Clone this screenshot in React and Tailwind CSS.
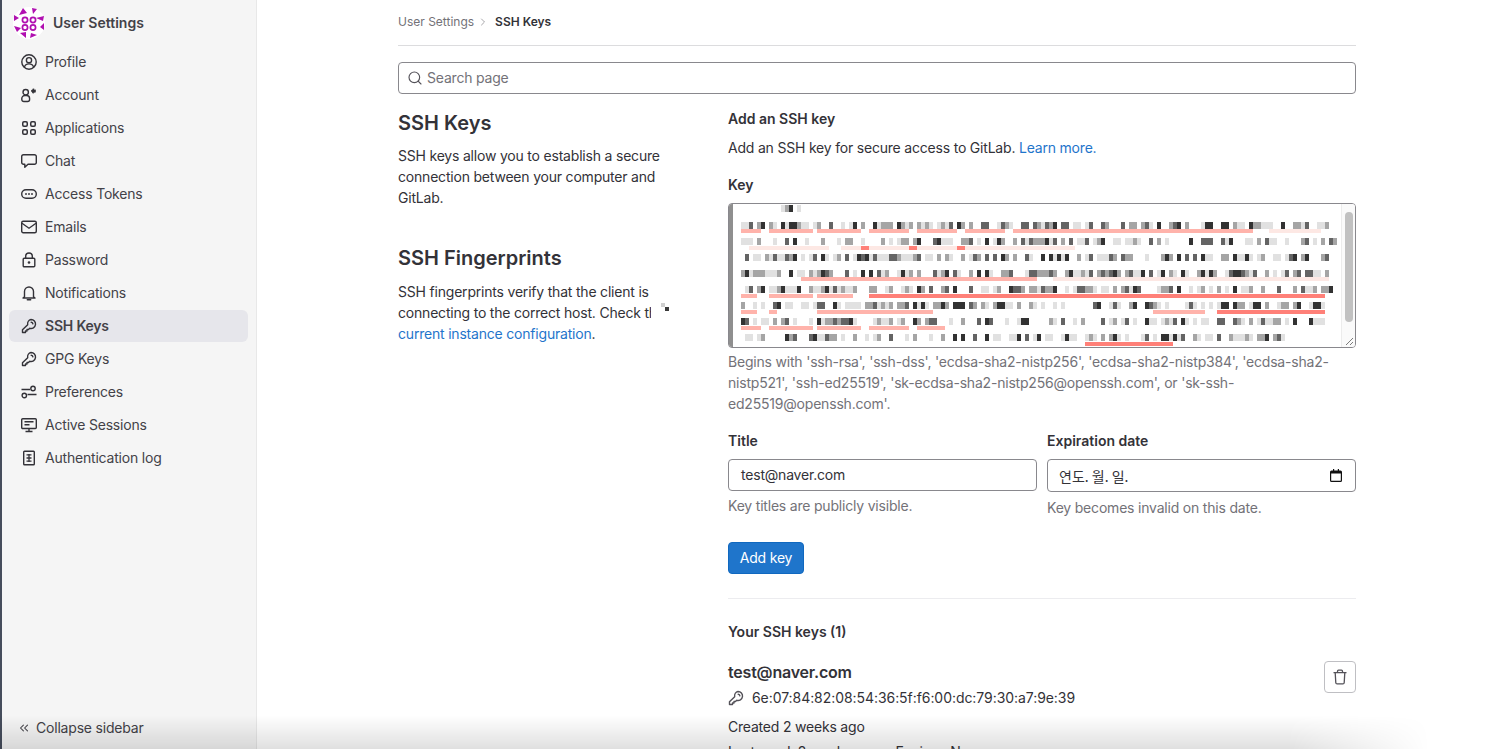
import { ChevronRight, ChevronsLeft, Search } from "lucide-react";

function KeyIcon({ className }) {
  return (
    <svg viewBox="0 0 16 16" fill="none" stroke="currentColor" strokeWidth="1.4" className={className}>
      <path d="M10 1.500a4.500 4.500 0 1 1-1.300 8.800L7.500 11.500H6V13H4.500v1.500h-3v-2.700l5.200-5.100A4.500 4.500 0 0 1 10 1.500z" strokeLinejoin="round" />
      <path d="M10.200 4.200c1 .1 1.600.7 1.700 1.700" strokeLinecap="round" />
    </svg>
  );
}

function ProfileIcon({ className }) {
  return (
    <svg viewBox="0 0 16 16" fill="none" stroke="currentColor" strokeWidth="1.400" className={className}>
      <circle cx="8" cy="8" r="7.200" />
      <circle cx="8" cy="6.200" r="2.600" />
      <path d="M3.400 13.300c.5-2.300 2-3.400 4.600-3.400s4.100 1.100 4.600 3.400" />
    </svg>
  );
}

function AccountIcon({ className }) {
  return (
    <svg viewBox="0 0 16 16" fill="none" stroke="currentColor" strokeWidth="1.400" className={className}>
      <circle cx="4.700" cy="5.200" r="2.700" />
      <path d="M.8 11.500a3 3 0 0 1 3-3h1.800a3 3 0 0 1 3 3v1a2 2 0 0 1-2 2H2.800a2 2 0 0 1-2-2z" />
      <circle cx="12.500" cy="4" r="1.700" fill="currentColor" strokeWidth="1.400" strokeDasharray="1.500 .6" />
    </svg>
  );
}

function AppsIcon({ className }) {
  return (
    <svg viewBox="0 0 16 16" fill="none" stroke="currentColor" strokeWidth="1.500" className={className}>
      <rect x="1.750" y="1.750" width="4.500" height="4.500" rx="1.200" />
      <rect x="9.750" y="1.750" width="4.500" height="4.500" rx="1.200" />
      <rect x="1.750" y="9.750" width="4.500" height="4.500" rx="1.200" />
      <rect x="9.750" y="9.750" width="4.500" height="4.500" rx="1.200" />
    </svg>
  );
}

function ChatIcon({ className }) {
  return (
    <svg viewBox="0 0 16 16" fill="none" stroke="currentColor" strokeWidth="1.400" strokeLinejoin="round" className={className}>
      <path d="M2.500 1.700h11a1.800 1.800 0 0 1 1.800 1.800v6a1.800 1.800 0 0 1-1.800 1.800H7l-3.200 3v-3H2.500A1.800 1.800 0 0 1 .7 9.500v-6a1.800 1.800 0 0 1 1.800-1.800z" />
    </svg>
  );
}

function TokenIcon({ className }) {
  return (
    <svg viewBox="0 0 16 16" fill="none" stroke="currentColor" strokeWidth="1.400" className={className}>
      <rect x=".700" y="3.700" width="14.600" height="8.600" rx="4.300" />
      <circle cx="5" cy="8" r=".95" fill="currentColor" stroke="none" />
      <circle cx="8" cy="8" r=".95" fill="currentColor" stroke="none" />
      <circle cx="11" cy="8" r=".95" fill="currentColor" stroke="none" />
    </svg>
  );
}

function MailIcon({ className }) {
  return (
    <svg viewBox="0 0 16 16" fill="none" stroke="currentColor" strokeWidth="1.400" className={className}>
      <rect x=".700" y="2.200" width="14.600" height="11.600" rx="1.500" />
      <path d="M1 4.200l7 5 7-5" />
    </svg>
  );
}

function LockIcon({ className }) {
  return (
    <svg viewBox="0 0 16 16" fill="none" stroke="currentColor" strokeWidth="1.400" className={className}>
      <rect x="2.200" y="6.200" width="11.600" height="8.600" rx="1" />
      <path d="M4.700 6V4.300a3.300 3.300 0 0 1 6.600 0V6" />
      <circle cx="8" cy="10.500" r="1.300" fill="currentColor" stroke="none" />
    </svg>
  );
}

function BellIcon({ className }) {
  return (
    <svg viewBox="0 0 16 16" fill="none" stroke="currentColor" strokeWidth="1.400" strokeLinejoin="round" className={className}>
      <path d="M3.500 11.800V6.500a4.500 4.500 0 0 1 9 0v5.300l1.500 1.200H2z" />
      <path d="M6.300 14.800h3.400" strokeLinecap="round" />
    </svg>
  );
}

function PrefsIcon({ className }) {
  return (
    <svg viewBox="0 0 16 16" fill="none" stroke="currentColor" strokeWidth="1.400" className={className}>
      <path d="M.5 5.500h8.500M6.500 10.500h9" />
      <circle cx="12" cy="4.500" r="2.200" />
      <circle cx="3.300" cy="11.500" r="2.200" />
    </svg>
  );
}

function MonitorIcon({ className }) {
  return (
    <svg viewBox="0 0 16 16" fill="none" stroke="currentColor" strokeWidth="1.400" className={className}>
      <rect x=".700" y="1.700" width="14.600" height="9.800" rx="1" />
      <path d="M3.500 4.800h9M3.500 7.800h5M8 11.500v3M4.500 14.500h7" />
    </svg>
  );
}

function TableIcon({ className }) {
  return (
    <svg viewBox="0 0 16 16" fill="none" stroke="currentColor" strokeWidth="1.400" className={className}>
      <rect x="2.700" y="1.200" width="10.600" height="13.600" rx=".8" />
      <path d="M5.500 4.800h5M5.500 8h5M5.500 11.200h5M8 4v8" strokeWidth="1.300" />
    </svg>
  );
}

function TrashIcon({ className }) {
  return (
    <svg viewBox="0 0 16 16" fill="none" stroke="currentColor" strokeWidth="1.300" className={className}>
      <path d="M1.500 3.700h13M5.500 3.500V2.200a1 1 0 0 1 1-1h3a1 1 0 0 1 1 1v1.300" />
      <path d="M3.200 3.700l.6 10a1.300 1.300 0 0 0 1.300 1.200h5.800a1.300 1.300 0 0 0 1.300-1.200l.6-10" />
    </svg>
  );
}

function CalendarIcon({ className }) {
  return (
    <svg viewBox="0 0 12 13" className={className}>
      <path d="M3 0h1.200v1.500h3.600V0H9v1.500h1.500A1.500 1.500 0 0 1 12 3v8.500a1.500 1.500 0 0 1-1.500 1.500h-9A1.500 1.500 0 0 1 0 11.500V3a1.500 1.500 0 0 1 1.500-1.500H3zM1.200 4.500v7c0 .2.100.3.300.3h9c.2 0 .3-.1.300-.3v-7z" fill="#111" />
    </svg>
  );
}

// identicon style logo, magenta on white
function Logo() {
  const rings = [
    [12, 13],
    [20, 13],
    [12, 20.5],
    [20, 20.5],
  ];
  return (
    <svg viewBox="0 0 32 32" className="w-8 h-8 shrink-0">
      <circle cx="16" cy="16" r="16" fill="#fff" />
      <g fill="#b010b0">
        <path d="M10 1l4 5-8 2zM19 1l5 1-4 5zM23 11l8-2-1 5zM31 16v7l-4-3zM17 31l1-5 6 2zM7 26l6-1v6zM1 19l7 2-4 4zM1 8l5 3-5 3z" />
      </g>
      <g fill="none" stroke="#b010b0" strokeWidth="1.700">
        {rings.map(([x, y]) => (
          <circle key={`${x}-${y}`} cx={x} cy={y} r="2.600" />
        ))}
      </g>
    </svg>
  );
}

const navItems = [
  { label: "Profile", Icon: ProfileIcon },
  { label: "Account", Icon: AccountIcon },
  { label: "Applications", Icon: AppsIcon },
  { label: "Chat", Icon: ChatIcon },
  { label: "Access Tokens", Icon: TokenIcon },
  { label: "Emails", Icon: MailIcon },
  { label: "Password", Icon: LockIcon },
  { label: "Notifications", Icon: BellIcon },
  { label: "SSH Keys", Icon: KeyIcon, active: true },
  { label: "GPG Keys", Icon: KeyIcon },
  { label: "Preferences", Icon: PrefsIcon },
  { label: "Active Sessions", Icon: MonitorIcon },
  { label: "Authentication log", Icon: TableIcon },
];

// red underlines in the redacted key: y, x from, x to, colour
const underlines = [
  [25, 12, 32, "#ffb3ab"], [25, 40, 84, "#ffb3ab"], [25, 88, 132, "#ffb3ab"], [25, 140, 180, "#ffb3ab"],
  [25, 188, 228, "#ffb3ab"], [25, 236, 276, "#ffb3ab"], [25, 284, 524, "#ffb3ab"], [25, 540, 592, "#fde8e4"],
  [42, 20, 100, "#fde8e4"], [42, 112, 346, "#fde8e4"], [42, 132, 140, "#ff8078"], [42, 180, 188, "#ff8078"], [42, 228, 236, "#ff8078"],
  [73, 72, 308, "#ffb3ab"], [73, 324, 600, "#fde8e4"],
  [90, 12, 28, "#ffb3ab"], [90, 40, 84, "#ffb3ab"], [90, 88, 124, "#ffb3ab"], [90, 140, 596, "#ff8078"],
  [106, 12, 28, "#ffb3ab"], [106, 40, 48, "#ffb3ab"], [106, 88, 204, "#ffb3ab"], [106, 424, 476, "#ffb3ab"], [106, 488, 596, "#ff8078"],
  [122, 12, 32, "#ffb3ab"], [122, 40, 84, "#ffb3ab"], [122, 88, 132, "#ffb3ab"], [122, 140, 180, "#ffb3ab"], [122, 188, 216, "#ffb3ab"],
  [138, 356, 444, "#ff8078"],
];

function buildPixels() {
  const rects = [];
  let seed = 12345;
  const rnd = () => {
    seed = (seed * 1664525 + 1013904223) % 4294967296;
    return seed / 4294967296;
  };
  const rows = [
    [0, 44, 72], [17, 12, 600], [33, 12, 606], [49, 12, 600], [65, 12, 604],
    [81, 12, 604], [97, 12, 606], [113, 12, 596], [129, 12, 556],
  ];
  rows.forEach(([y, from, to]) => {
    for (let x = from; x < to; x += 4) {
      // one value per column so the smear reads as taller blocks
      const v = rnd();
      if (v < 0.4) continue;
      const shade = v > 0.9 ? 50 : v > 0.78 ? 100 : v > 0.62 ? 165 : 225;
      rects.push(
        <rect key={`${x}-${y}`} x={x} y={y + 1} width="4" height="7" fill={`rgb(${shade},${shade},${shade})`} />
      );
    }
  });
  return rects;
}

function RedactedKey() {
  return (
    <svg width="616" height="143" viewBox="0 0 616 143" className="block">
      {underlines.map(([y, x1, x2, color], i) => (
        <rect key={i} x={x1} y={y} width={x2 - x1} height="4" fill={color} />
      ))}
      {buildPixels()}
    </svg>
  );
}

function App() {
  return (
    <div className="relative flex h-screen overflow-hidden bg-white text-sm tracking-[-0.2px] text-[#333238] font-['Inter',sans-serif]">
      <aside className="flex flex-col w-[257px] shrink-0 bg-[#f5f5f5] border-r border-[#e8e8e8] border-l-2 border-l-[#464d5c]">
        <div className="flex items-center gap-2 pl-[11px] pt-[6px] h-[39px]">
          <Logo />
          <span className="font-semibold tracking-normal text-[#434248]">User Settings</span>
        </div>
        <nav className="flex flex-col gap-px pl-[7px] pr-2 pt-[7px]">
          {navItems.map(({ label, Icon, active }) => (
            <div
              key={label}
              className={`flex items-center gap-2 h-8 px-3 rounded-md text-[#434248] ${
                active ? "bg-[#e6e6eb] font-semibold" : ""
              }`}
            >
              <Icon className="w-4 h-4 text-[#333238]" />
              <span>{label}</span>
            </div>
          ))}
        </nav>
        <div className="mt-auto flex items-center gap-[5px] pl-[15px] pb-[11px] text-[#434248]">
          <ChevronsLeft className="w-3.5 h-3.5" strokeWidth={1.8} />
          <span>Collapse sidebar</span>
        </div>
      </aside>

      <main className="flex-1 min-w-0 pl-[141px]">
        <div className="w-[958px]">
          <div className="flex items-center h-[46px] border-b border-[#dcdcde] text-xs tracking-normal pb-[2px]">
            <span className="text-[#737278]">User Settings</span>
            <ChevronRight className="w-3 h-3 mx-[3px] text-[#89888d]" strokeWidth={1.5} />
            <span className="font-semibold ml-[3px]">SSH Keys</span>
          </div>

          <div className="flex items-center gap-1 h-8 mt-4 px-2 border border-[#89888d] rounded">
            <Search className="w-4 h-4 text-[#535158]" strokeWidth={1.7} />
            <span className="text-[#737278]">Search page</span>
          </div>

          <div className="flex mt-[14px]">
            <div className="w-[330px] shrink-0">
              <h1 className="text-xl font-semibold tracking-normal leading-[30px]">SSH Keys</h1>
              <p className="mt-[7px] w-[275px] leading-[21px]">
                SSH keys allow you to establish a secure connection between your computer and GitLab.
              </p>
              <h2 className="text-xl font-semibold tracking-normal leading-[30px] mt-[35px]">SSH Fingerprints</h2>
              <div className="relative w-[280px] mt-[8px]">
                <p className="leading-[21px]">
                  SSH fingerprints verify that the client is connecting to the correct host. Check the{" "}
                  <span className="text-[#1f75cb]">current instance configuration</span>.
                </p>
                {/* redaction smear sitting over the line ends */}
                <div className="absolute left-[253px] top-0 w-[22px] h-[42px] bg-white">
                  <div className="absolute left-[10px] top-[22px] w-1 h-1 bg-[#cfcfcf]" />
                  <div className="absolute left-[14px] top-[26px] w-1 h-1 bg-[#3a3a3a]" />
                </div>
              </div>
            </div>

            <div className="flex-1 min-w-0">
              <div className="font-semibold tracking-normal leading-[21px]">Add an SSH key</div>
              <p className="mt-2 leading-[21px]">
                Add an SSH key for secure access to GitLab. <span className="text-[#1f75cb]">Learn more.</span>
              </p>

              <div className="font-semibold tracking-normal mt-4 leading-[21px]">Key</div>
              <div className="relative mt-2 h-[145px] w-[628px] border border-[#89888d] rounded overflow-hidden">
                <div className="absolute left-0 top-0 bottom-0 w-1 bg-[#8f8f8f]" />
                <RedactedKey />
                <div className="absolute top-0 right-0 bottom-0 w-[14px] bg-[#fafafa] border-l border-[#ececec]">
                  <div className="mt-[8px] mx-auto w-2 h-[110px] rounded bg-[#c1c1c1]" />
                </div>
                <svg viewBox="0 0 10 10" className="absolute right-[1px] bottom-[1px] w-2.5 h-2.5" stroke="#7c7c7c" strokeWidth="1">
                  <path d="M2 9L9 2M6 9l3-3" />
                </svg>
              </div>
              <p className="mt-[3px] leading-[21px] text-[#737278]">
                Begins with 'ssh-rsa', 'ssh-dss', 'ecdsa-sha2-nistp256', 'ecdsa-sha2-nistp384', 'ecdsa-sha2-nistp521', 'ssh-ed25519', 'sk-ecdsa-sha2-nistp256@openssh.com', or 'sk-ssh-ed25519@openssh.com'.
              </p>

              <div className="flex gap-[10px] mt-4">
                <div className="w-[309px]">
                  <div className="font-semibold tracking-normal leading-[21px]">Title</div>
                  <div className="flex items-center h-8 mt-2 px-3 border border-[#89888d] rounded">test@naver.com</div>
                  <p className="mt-1 leading-[21px] text-[#737278]">Key titles are publicly visible.</p>
                </div>
                <div className="flex-1">
                  <div className="font-semibold tracking-normal leading-[21px]">Expiration date</div>
                  <div className="flex items-center justify-between h-[33px] mt-2 pl-[11px] pr-[13px] border border-[#89888d] rounded">
                    <span className="tracking-normal font-['Noto_Sans_CJK_KR',sans-serif]">연도. 월. 일.</span>
                    <CalendarIcon className="w-3 h-[13px]" />
                  </div>
                  <p className="mt-[5px] leading-[21px] text-[#737278]">Key becomes invalid on this date.</p>
                </div>
              </div>

              <button className="flex items-center justify-center mt-[24px] h-8 w-[76px] rounded bg-[#1f75cb] text-white border border-[#1068bf]">Add key</button>

              <div className="mt-[24px] border-t border-[#ececef] pt-[22px] font-semibold tracking-normal leading-[21px]">Your SSH keys (1)</div>

              <div className="flex justify-between mt-[18px]">
                <div>
                  <div className="text-base font-semibold leading-6">test@naver.com</div>
                  <div className="flex items-center gap-[8px] mt-[3px] leading-[21px]">
                    <KeyIcon className="w-4 h-4 text-[#535158]" />
                    <span className="tracking-[-0.06px]">6e:07:84:82:08:54:36:5f:f6:00:dc:79:30:a7:9e:39</span>
                  </div>
                  <div className="mt-2 leading-[21px]">Created 2 weeks ago</div>
                  <div className="flex gap-[16px] mt-1 leading-[21px]">
                    <span>Last used: 2 weeks ago</span>
                    <span>Expires: Never</span>
                  </div>
                </div>
                <button className="flex items-center justify-center w-8 h-8 mt-px border border-[#bfbfc3] rounded">
                  <TrashIcon className="w-4 h-4 text-[#535158]" />
                </button>
              </div>
            </div>
          </div>
        </div>
      </main>

      <div className="pointer-events-none absolute left-0 bottom-0 w-[1430px] h-[34px] bg-gradient-to-b from-transparent to-[#0000001f] [mask-image:linear-gradient(to_right,black_90%,transparent)]" />
    </div>
  );
}

export default App;
